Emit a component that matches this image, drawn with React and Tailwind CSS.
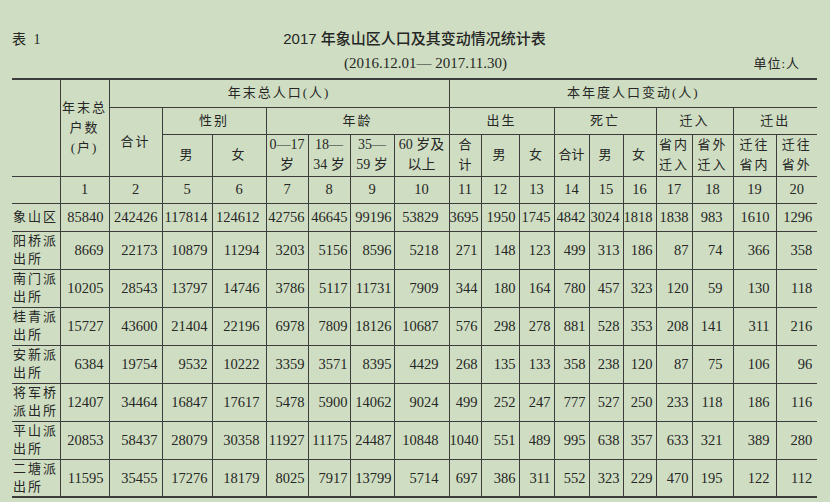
import React from "react";

// 列宽（像素）与右侧留白
const widths = [48, 49, 53, 50, 54, 42, 42, 44, 55, 32, 38, 35, 35, 34, 33, 36, 41, 43, 41];
const padR = ["pr-[5px]", "pr-[4px]", "pr-[4px]", "pr-[6px]", "pr-[3px]", "pr-[2px]", "pr-[2px]", "pr-[10px]", "pr-[3px]", "pr-[3px]", "pr-[3px]", "pr-[3px]", "pr-[3px]", "pr-[3px]", "pr-[3px]", "pr-[10px]", "pr-[6px]", "pr-[5px]"];

const colNums = [1, 2, 5, 6, 7, 8, 9, 10, 11, 12, 13, 14, 15, 16, 17, 18, 19, 20];

const rows = [
  ["象山区", null, 85840, 242426, 117814, 124612, 42756, 46645, 99196, 53829, 3695, 1950, 1745, 4842, 3024, 1818, 1838, 983, 1610, 1296],
  ["阳桥派", "出所", 8669, 22173, 10879, 11294, 3203, 5156, 8596, 5218, 271, 148, 123, 499, 313, 186, 87, 74, 366, 358],
  ["南门派", "出所", 10205, 28543, 13797, 14746, 3786, 5117, 11731, 7909, 344, 180, 164, 780, 457, 323, 120, 59, 130, 118],
  ["桂青派", "出所", 15727, 43600, 21404, 22196, 6978, 7809, 18126, 10687, 576, 298, 278, 881, 528, 353, 208, 141, 311, 216],
  ["安新派", "出所", 6384, 19754, 9532, 10222, 3359, 3571, 8395, 4429, 268, 135, 133, 358, 238, 120, 87, 75, 106, 96],
  ["将军桥", "派出所", 12407, 34464, 16847, 17617, 5478, 5900, 14062, 9024, 499, 252, 247, 777, 527, 250, 233, 118, 186, 116],
  ["平山派", "出所", 20853, 58437, 28079, 30358, 11927, 11175, 24487, 10848, 1040, 551, 489, 995, 638, 357, 633, 321, 389, 280],
  ["二塘派", "出所", 11595, 35455, 17276, 18179, 8025, 7917, 13799, 5714, 697, 386, 311, 552, 323, 229, 470, 195, 122, 112],
];

const b = "border border-[#3c3c3c] p-0";
const hd = "text-[13px] tracking-[2px] leading-[20px] text-center align-middle";

function Two({ a, c, lh = "leading-[20px]" }) {
  return (
    <div className={`${lh} whitespace-nowrap`}>
      <div>{a}</div>
      <div>{c}</div>
    </div>
  );
}

export default function App() {
  return (
    <div className="w-[830px] h-[502px] bg-[#cfdec2] overflow-hidden pt-[28px] text-[#262626] font-['Liberation_Serif','Noto_Sans_CJK_SC',serif]">
      {/* 标题 */}
      <div className="ml-[12px] w-[805px]">
        <div className="grid grid-cols-[1fr_auto_1fr] items-center h-[20px]">
          <div className="text-[14px] tracking-[2px]">表 1</div>
          <div className="text-[15px] font-medium font-['Liberation_Sans','Noto_Sans_CJK_SC',sans-serif]">
            2017 年象山区人口及其变动情况统计表
          </div>
          <div />
        </div>
        <div className="grid grid-cols-[1fr_auto_1fr] items-center h-[20px] mt-[4px]">
          <div />
          <div className="text-[15px] pl-[22px]">(2016.12.01— 2017.11.30)</div>
          <div className="justify-self-end pr-[17px] text-[13px] tracking-[1px]">单位:人</div>
        </div>
      </div>

      {/* 表格 */}
      <table className="ml-[12px] mt-[6px] w-[805px] table-fixed border-collapse">
        <colgroup>
          {widths.map((w, i) => (
            <col key={i} style={{ width: w }} />
          ))}
        </colgroup>
        <thead>
          <tr className="h-[28px]">
            <td rowSpan={3} className={`${b} border-l-0 border-t-2`} />
            <td rowSpan={3} className={`${b} border-t-2 ${hd}`}>
              <div className="leading-[20px]">
                <div>年末总</div>
                <div>户数</div>
                <div>(户)</div>
              </div>
            </td>
            <td colSpan={7} className={`${b} border-t-2 ${hd}`}>年末总人口(人)</td>
            <td colSpan={10} className={`${b} border-t-2 border-r-0 ${hd}`}>本年度人口变动(人)</td>
          </tr>
          <tr className="h-[27px]">
            <td rowSpan={2} className={`${b} ${hd}`}>合计</td>
            <td colSpan={2} className={`${b} ${hd}`}>性别</td>
            <td colSpan={4} className={`${b} ${hd}`}>年龄</td>
            <td colSpan={3} className={`${b} ${hd}`}>出生</td>
            <td colSpan={3} className={`${b} ${hd}`}>死亡</td>
            <td colSpan={2} className={`${b} ${hd}`}>迁入</td>
            <td colSpan={2} className={`${b} border-r-0 ${hd}`}>迁出</td>
          </tr>
          <tr className="h-[42px]">
            <td className={`${b} ${hd}`}>男</td>
            <td className={`${b} ${hd}`}>女</td>
            <td className={`${b} text-[14px] text-center`}>
              <Two a="0—17" c="岁" />
            </td>
            <td className={`${b} text-[14px] text-center`}>
              <Two a="18—" c="34 岁" />
            </td>
            <td className={`${b} text-[14px] text-center`}>
              <Two a="35—" c="59 岁" />
            </td>
            <td className={`${b} text-[14px] text-center`}>
              <Two a="60 岁及" c="以上" />
            </td>
            <td className={`${b} ${hd} tracking-normal`}>
              <Two a="合" c="计" />
            </td>
            <td className={`${b} ${hd}`}>男</td>
            <td className={`${b} ${hd}`}>女</td>
            <td className={`${b} ${hd} tracking-normal`}>合计</td>
            <td className={`${b} ${hd}`}>男</td>
            <td className={`${b} ${hd}`}>女</td>
            <td className={`${b} ${hd}`}>
              <Two a="省内" c="迁入" />
            </td>
            <td className={`${b} ${hd}`}>
              <Two a="省外" c="迁入" />
            </td>
            <td className={`${b} ${hd}`}>
              <Two a="迁往" c="省内" />
            </td>
            <td className={`${b} border-r-0 ${hd}`}>
              <Two a="迁往" c="省外" />
            </td>
          </tr>
        </thead>
        <tbody>
          <tr className="h-[27px]">
            <td className={`${b} border-l-0`} />
            {colNums.map((n, i) => (
              <td
                key={n}
                className={`${b} ${i === colNums.length - 1 ? "border-r-0" : ""} text-center text-[14.5px]`}
              >
                {n}
              </td>
            ))}
          </tr>
          {rows.map((r, ri) => {
            const last = ri === rows.length - 1;
            return (
              <tr key={r[0]} className={r[1] ? "h-[38px]" : "h-[28px]"}>
                <td className={`${b} border-l-0 ${last ? "border-b-2" : ""} text-[13px] tracking-[2px] leading-[18px] whitespace-nowrap pl-[1px]`}>
                  {r[1] ? <Two a={r[0]} c={r[1]} lh="leading-[18px]" /> : r[0]}
                </td>
                {r.slice(2).map((v, i) => (
                  <td
                    key={i}
                    className={`${b} ${padR[i]} ${i === 17 ? "border-r-0" : ""} ${last ? "border-b-2" : ""} text-right text-[14.5px] leading-[18px] whitespace-nowrap`}
                  >
                    {v}
                  </td>
                ))}
              </tr>
            );
          })}
        </tbody>
      </table>
    </div>
  );
}
